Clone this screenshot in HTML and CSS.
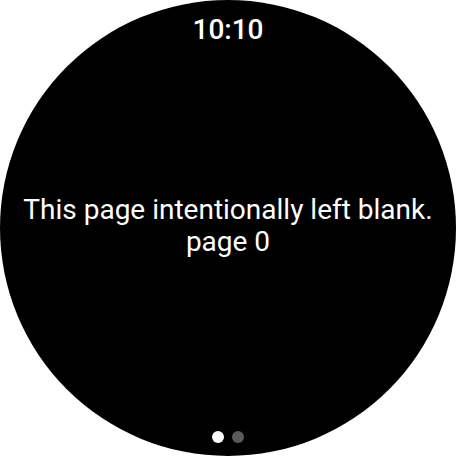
FILE: index.html
```html
<!DOCTYPE html>
<html>
<head>
<meta charset="utf-8">
<link rel="stylesheet" href="styles.css">
</head>
<body>
<div class="watch">
  <div class="time">10:10</div>
  <div class="content">
    <p class="msg">This page intentionally left blank.<br>page 0</p>
  </div>
  <div class="dots">
    <span class="dot active"></span>
    <span class="dot"></span>
  </div>
</div>
</body>
</html>
```
FILE: styles.css
```css
html, body {
  margin: 0;
  padding: 0;
  background: #ffffff;
}
.watch {
  width: 456px;
  height: 456px;
  border-radius: 50%;
  background: #000000;
  display: flex;
  flex-direction: column;
  align-items: center;
  font-family: Roboto, "Liberation Sans", sans-serif;
  color: #ffffff;
}
.time {
  margin-top: 14px;
  font-size: 28px;
  font-weight: 500;
  line-height: 32px;
}
.content {
  flex: 1;
  display: flex;
  align-items: center;
  justify-content: center;
  padding-bottom: 25px;
}
.msg {
  margin: 0;
  text-align: center;
  font-size: 28px;
  line-height: 32px;
}
.dots {
  display: flex;
  gap: 8px;
  margin-bottom: 13px;
}
.dot {
  width: 12px;
  height: 12px;
  border-radius: 50%;
  background: #5a5a5a;
}
.dot.active {
  background: #ffffff;
}
```
